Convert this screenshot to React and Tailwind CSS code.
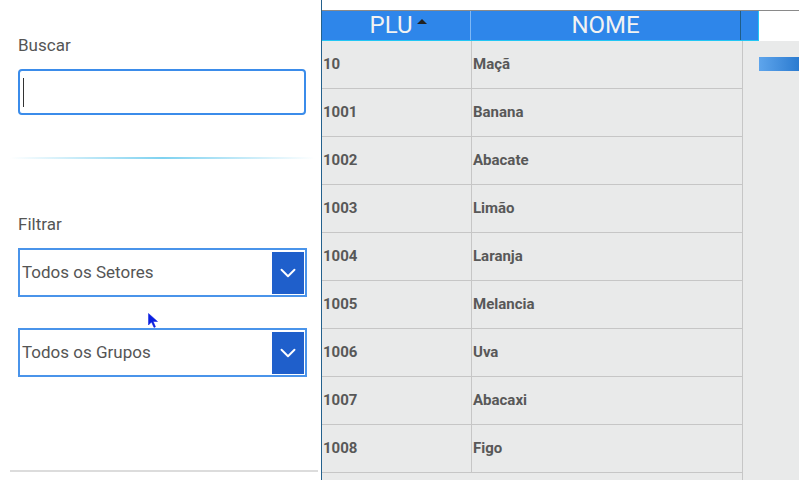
import React from 'react';
import { ChevronDown } from 'lucide-react';

const produtos = [
  { plu: '10', nome: 'Maçã' },
  { plu: '1001', nome: 'Banana' },
  { plu: '1002', nome: 'Abacate' },
  { plu: '1003', nome: 'Limão' },
  { plu: '1004', nome: 'Laranja' },
  { plu: '1005', nome: 'Melancia' },
  { plu: '1006', nome: 'Uva' },
  { plu: '1007', nome: 'Abacaxi' },
  { plu: '1008', nome: 'Figo' },
];

const Select = ({ label }) => (
  <div className="mx-[18px] flex h-[49px] w-[289px] items-center border-2 border-[#4a94ea] bg-white pl-[2px] pr-[1px]">
    <span className="flex-1 text-[17px] text-[#555]">{label}</span>
    <div className="flex h-[42px] w-[32px] items-center justify-center bg-[#1f5fcb]">
      <ChevronDown size={26} strokeWidth={1.75} className="text-white" />
    </div>
  </div>
);

const App = () => {
  return (
    <div
      className="relative flex h-[480px] w-[799px] overflow-hidden bg-white"
      style={{ fontFamily: 'Roboto, "Noto Sans", sans-serif' }}
    >
      {/* painel de filtros */}
      <div className="flex w-[321px] shrink-0 flex-col">
        <div className="mt-[34px] ml-[18px] h-[22px] text-[17px] leading-[22px] text-[#555]">Buscar</div>
        <div className="mt-[13px] ml-[18px] flex h-[46px] w-[288px] items-center rounded-[4px] border-2 border-[#3b8cea] bg-white pl-[3px]">
          <div className="h-[29px] w-px bg-[#333]" />
        </div>
        <div className="mt-[42px] ml-[10px] h-[2px] w-[305px] bg-gradient-to-r from-transparent via-[#7fd2f0] to-transparent" />
        <div className="mt-[54px] ml-[18px] h-[22px] text-[17px] leading-[22px] text-[#555]">Filtrar</div>
        <div className="mt-[13px]">
          <Select label="Todos os Setores" />
        </div>
        <div className="mt-[31px]">
          <Select label="Todos os Grupos" />
        </div>
        <div className="mt-[93px] ml-[10px] h-[2px] w-[308px] bg-[#dcdcdc]" />
      </div>

      {/* tabela */}
      <div className="flex min-h-0 flex-1 flex-col border-l border-[#24618d]">
        <div className="h-[11px] shrink-0 border-b border-[#8a8a8a] bg-white" />
        <div className="flex h-[30px] shrink-0">
          <div className="flex w-[437px] border-r border-b border-[#22c6f5] bg-[#2e86ea] text-[24px] leading-[29px] text-[#f2f2f2]">
            <div className="flex w-[149px] items-center justify-center border-r border-[#7fb8f5]">
              <span className="ml-[4px]">PLU</span>
              <span className="mb-[8px] ml-[4px] h-0 w-0 border-x-[5px] border-b-[5px] border-x-transparent border-b-[#222]" />
            </div>
            <div className="flex w-[270px] items-center justify-center border-r border-[#1f5d88]">NOME</div>
            <div className="flex-1" />
          </div>
          <div className="flex-1 bg-white" />
        </div>
        <div className="flex min-h-0 flex-1 overflow-hidden bg-[#e9eaea]">
          <div className="w-[421px] shrink-0 border-r border-[#c6c6c6]">
            {produtos.map((p) => (
              <div key={p.plu} className="flex h-[48px] border-b border-[#c6c6c6] text-[15px] font-bold text-[#585858]">
                <div className="flex w-[149px] items-center pl-[1px]">{p.plu}</div>
                <div className="flex flex-1 items-center border-l border-[#c6c6c6] pl-[1px]">{p.nome}</div>
              </div>
            ))}
          </div>
          <div className="flex-1 pt-[16px] pl-[16px]">
            <div className="h-[14px] bg-gradient-to-r from-[#5ea5ec] to-[#2a7bd0]" />
          </div>
        </div>
      </div>

      {/* ponteiro do mouse */}
      <svg className="absolute left-[148px] top-[313px]" width="12" height="16" viewBox="0 0 12 16">
        <path d="M0.5 0.5 L0.5 12 L3.5 9 L6 14.5 L7.5 13.8 L5.2 8.5 L9.5 8.5 Z" fill="#0a1fe0" stroke="#0a1fe0" strokeWidth="0.5" />
      </svg>
    </div>
  );
};

export default App;
